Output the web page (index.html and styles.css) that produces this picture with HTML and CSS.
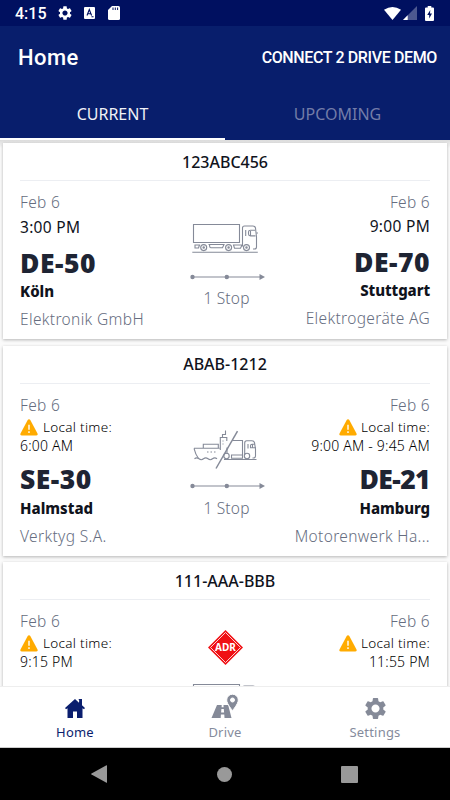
FILE: index.html
```html
<!DOCTYPE html>
<html lang="en">
<head>
    <meta charset="UTF-8">
    <meta name="viewport" content="width=device-width, initial-scale=1.0">
    <title>Home</title>
    <link rel="stylesheet" href="styles.css">
</head>
<body>
    <!-- shared icons -->
    <svg class="sprite" width="0" height="0">
        <symbol id="gear" viewBox="0 0 24 24">
            <path d="M19.43 12.98c.04-.32.07-.64.07-.98s-.03-.66-.07-.98l2.11-1.65c.19-.15.24-.42.12-.64l-2-3.46c-.12-.22-.39-.3-.61-.22l-2.49 1c-.52-.4-1.08-.73-1.69-.98l-.38-2.65C14.46 2.18 14.25 2 14 2h-4c-.25 0-.46.18-.49.42l-.38 2.65c-.61.25-1.17.59-1.69.98l-2.49-1c-.23-.09-.49 0-.61.22l-2 3.46c-.13.22-.07.49.12.64l2.11 1.65c-.04.32-.07.65-.07.98s.03.66.07.98l-2.11 1.65c-.19.15-.24.42-.12.64l2 3.46c.12.22.39.3.61.22l2.49-1c.52.4 1.08.73 1.69.98l.38 2.65c.03.24.24.42.49.42h4c.25 0 .46-.18.49-.42l.38-2.65c.61-.25 1.17-.59 1.69-.98l2.49 1c.23.09.49 0 .61-.22l2-3.46c.12-.22.07-.49-.12-.64l-2.11-1.65zM12 15.9c-2.15 0-3.9-1.75-3.9-3.9s1.75-3.9 3.9-3.9 3.9 1.75 3.9 3.900-1.750 3.900-3.900 3.900z"/>
        </symbol>
        <symbol id="warning" viewBox="0 0 18 17">
            <path fill="#ffab00" d="M9 .3c.6 0 1 .3 1.300 .8l7.200 13.400c.5 1-.1 2-1.200 2H1.700c-1.100 0-1.700-1-1.200-2L7.700 1.100C8 .6 8.400 .3 9 .3z"/>
            <path stroke="#fff" stroke-width="1.400" d="M9 5.800v5M9 12.300v1.700"/>
        </symbol>
        <symbol id="truck" viewBox="0 0 66 30">
            <g fill="none" stroke="#858a98" stroke-width="1.100">
                <path d="M1.500 1.500h46v18h-46zM.3 29.200h65.500"/>
                <path d="M50.500 21.500V5q0-2 2-2h8.500q2 0 2.500 2l1 9v10q0 2-2 2h-1.500M50.500 21.500v2"/>
                <path d="M64.300 10h2M53.700 7v6M63 7.300h-4.500q-2 0-2 1.800v2q0 1.800 2 1.800h5M58.500 8v5"/>
                <path d="M3 22h4.500l-1 3H3zM16.500 21.500h15.500l-1.500 3.300h-11.500q-1.500 0-1.500-3.300M41.500 22h8.500l-1.500 3.200h-6z"/>
                <circle cx="11.700" cy="24.600" r="3"/><circle cx="36.600" cy="24.600" r="3"/><circle cx="54.500" cy="24.600" r="3"/>
                <circle cx="11.700" cy="24.600" r=".7"/><circle cx="36.600" cy="24.600" r=".7"/><circle cx="54.500" cy="24.600" r=".7"/>
            </g>
        </symbol>
        <symbol id="ferry" viewBox="0 0 64 40">
            <g fill="none" stroke="#858a98" stroke-width="1.100">
                <path d="M1 18.300h25.500M5.500 28.500Q2.500 24.500 1 18.300M10.300 18.300v-4h15v4M27.300 20V7.500h6.500v3.500M29.500 7.500V4.500h3V.5"/>
                <path d="M1.500 28.800q2.200-1.800 4.500 0t4.500 0 4.500 0 4.500 0 4.500 0"/>
                <path d="M14 22h1.500M17.500 22h1.500M21 22h1.500M29.500 11h1M29.500 14h1"/>
                <path stroke-width="1.500" d="M44.500 1.200L23 38.500"/>
                <path d="M39.500 10.500h10v14.500M34 24V17.500M31 29.500h32.500"/>
                <path d="M51.700 25V13q0-2.300 2-2.300h5.300q2 0 2.500 2l1 6.300v7q0 2-2 2h-1M62 14.300h-3q-1.500 0-1.500 1.500v2h5.500M55 14v4.500M59.500 14v4"/>
                <path d="M38.500 25h11v3.200h-11z"/>
                <circle cx="33.500" cy="26" r="2.700"/><circle cx="54" cy="26" r="2.700"/>
            </g>
        </symbol>
        <symbol id="route" viewBox="0 0 76 6">
            <path stroke="#858a98" stroke-width="1.200" d="M2 3h70"/>
            <path fill="#858a98" d="M69.500 0L75 3l-5.500 3z"/>
            <circle cx="2.500" cy="3" r="2.200" fill="#858a98"/><circle cx="36.800" cy="3" r="2.200" fill="#858a98"/>
        </symbol>
    </svg>

    <div class="phone">
        <header>
            <div class="status">
                <span class="clock">4:15</span>
                <svg class="st-gear" width="16" height="16" fill="#fff"><use href="#gear"/></svg>
                <svg class="st-lang" width="11" height="12" viewBox="0 0 11 12">
                    <rect width="11" height="12" rx="1" fill="#fff"/>
                    <path d="M3 8.500L5.300 2.500l2.300 6M3.700 6.700h3M7.500 9.700h2" fill="none" stroke="#001060" stroke-width="1.100"/>
                </svg>
                <svg class="st-card" width="12" height="14" viewBox="0 0 12 14">
                    <path fill="#fff" d="M4 0h6.500Q12 0 12 1.500v11q0 1.500-1.500 1.500h-9Q0 14 0 12.500V4z"/>
                    <path stroke="#001060" stroke-width="1" d="M5 1.500v2.500M7.300 1.500v2.500M9.600 1.500v2.500"/>
                </svg>
                <div class="status-right">
                    <svg width="17" height="13" viewBox="0 0 17 13"><path fill="#fff" d="M0 2.800Q8.500-2.800 17 2.800L8.500 13z"/></svg>
                    <svg width="14" height="14" viewBox="0 0 14 14"><path fill="#4d5890" d="M14 0v14H0z"/><path fill="#fff" d="M4.700 9.300V14H0z"/></svg>
                    <svg class="battery" width="9" height="15" viewBox="0 0 9 15">
                        <path fill="#fff" d="M2.700 0h3.600v1.500H8q1 0 1 1V14q0 1-1 1H1q-1 0-1-1V2.500q0-1 1-1h1.700z"/>
                        <path fill="#001060" d="M5.300 4L2.200 9h2v3.500L7 7.500H5z"/>
                    </svg>
                </div>
            </div>
            <div class="appbar">
                <h1>Home</h1>
                <span class="demo">CONNECT 2 DRIVE DEMO</span>
            </div>
            <div class="tabs">
                <div class="tab active">CURRENT</div>
                <div class="tab">UPCOMING</div>
            </div>
        </header>

        <main>
            <section class="card first">
                <h2>123ABC456</h2>
                <div class="trip">
                    <div class="place">
                        <p class="date">Feb 6</p>
                        <p class="time">3:00 PM</p>
                        <p class="code">DE-50</p>
                        <p class="city">Köln</p>
                        <p class="company">Elektronik GmbH</p>
                    </div>
                    <div class="middle">
                        <svg class="truck" width="66" height="30"><use href="#truck"/></svg>
                        <svg class="route" width="76" height="6"><use href="#route"/></svg>
                        <p class="stops">1 Stop</p>
                    </div>
                    <div class="place right">
                        <p class="date">Feb 6</p>
                        <p class="time">9:00 PM</p>
                        <p class="code">DE-70</p>
                        <p class="city">Stuttgart</p>
                        <p class="company">Elektrogeräte AG</p>
                    </div>
                </div>
            </section>

            <section class="card second">
                <h2>ABAB-1212</h2>
                <div class="trip">
                    <div class="place">
                        <p class="date">Feb 6</p>
                        <p class="local"><svg width="18" height="17"><use href="#warning"/></svg>Local time:</p>
                        <p class="hours">6:00 AM</p>
                        <p class="code">SE-30</p>
                        <p class="city">Halmstad</p>
                        <p class="company">Verktyg S.A.</p>
                    </div>
                    <div class="middle">
                        <svg class="ferry" width="64" height="40"><use href="#ferry"/></svg>
                        <svg class="route" width="76" height="6"><use href="#route"/></svg>
                        <p class="stops">1 Stop</p>
                    </div>
                    <div class="place right">
                        <p class="date">Feb 6</p>
                        <p class="local"><svg width="18" height="17"><use href="#warning"/></svg>Local time:</p>
                        <p class="hours">9:00 AM - 9:45 AM</p>
                        <p class="code narrow">DE-21</p>
                        <p class="city">Hamburg</p>
                        <p class="company">Motorenwerk Ha...</p>
                    </div>
                </div>
            </section>

            <section class="card third">
                <h2>111-AAA-BBB</h2>
                <div class="trip">
                    <div class="place">
                        <p class="date">Feb 6</p>
                        <p class="local"><svg width="18" height="17"><use href="#warning"/></svg>Local time:</p>
                        <p class="hours">9:15 PM</p>
                    </div>
                    <div class="middle">
                        <svg class="adr" width="35" height="35" viewBox="0 0 35 35">
                            <path fill="#f01014" d="M17.500 0L35 17.500 17.500 35 0 17.500z"/>
                            <path fill="none" stroke="#fff" stroke-width=".8" d="M17.500 2.500L32.500 17.500 17.500 32.500 2.500 17.500z"/>
                            <text x="17.500" y="21.200" text-anchor="middle" class="adr-text">ADR</text>
                        </svg>
                        <svg class="truck" width="66" height="30"><use href="#truck"/></svg>
                    </div>
                    <div class="place right">
                        <p class="date">Feb 6</p>
                        <p class="local"><svg width="18" height="17"><use href="#warning"/></svg>Local time:</p>
                        <p class="hours">11:55 PM</p>
                    </div>
                </div>
            </section>
        </main>

        <nav class="bottom">
            <div class="item selected">
                <svg width="20" height="19" viewBox="0 0 20 19"><path fill="#0a1e6e" d="M10 0l4 3.700L14.200 1.500L13.500 0H17v6.300l3 2.700-1 1.200-1.500-1V19H12v-6.500H8V19H2.500V9.200l-1.500 1L0 9z"/></svg>
                <span>Home</span>
            </div>
            <div class="item drive">
                <svg width="28" height="24" viewBox="0 0 28 24">
                    <path fill="#858a98" fill-rule="evenodd" d="M6 11h4.700l-.1 2.300h2L12.500 11h4.700L20.500 24h-7l-.2-3.500h-3.400L9.700 24H.5zM10.400 15l-.3 3.500h3l-.3-3.500z"/>
                    <path fill="#858a98" stroke="#fff" stroke-width="1" fill-rule="evenodd" d="M21.500.2a5.800 5.800 0 0 1 5.800 5.800c0 4-5.800 10.500-5.800 10.500S15.700 10 15.700 6A5.800 5.800 0 0 1 21.500.2zM21.500 4a2 2 0 1 0 0 4 2 2 0 0 0 0-4z"/>
                </svg>
                <span>Drive</span>
            </div>
            <div class="item settings">
                <svg width="25" height="25" fill="#858a98"><use href="#gear"/></svg>
                <span>Settings</span>
            </div>
        </nav>

        <div class="android">
            <div><svg width="16" height="18" viewBox="0 0 16 18"><path fill="#999" d="M16 .5v17q0 .5-1 0L.5 9.500q-.7-.5 0-1L15 .5q1-.5 1 0z"/></svg></div>
            <div><span class="circle"></span></div>
            <div><span class="square"></span></div>
        </div>
    </div>
</body>
</html>
```
FILE: styles.css
```css
* {
    box-sizing: border-box;
}
body {
    margin: 0;
    font-family: "Noto Sans", "Open Sans", sans-serif;
    color: #10131c;
}
h1, h2, p {
    margin: 0;
    font-weight: normal;
}
svg {
    display: block;
    flex: none;
}
.sprite {
    display: none;
}
.phone {
    width: 450px;
    height: 800px;
    overflow: hidden;
    display: flex;
    flex-direction: column;
    background-color: #fafafa;
}

/* header */
header {
    height: 140px;
    flex: none;
    background-color: #081e6c;
    color: white;
}
.status {
    height: 26px;
    padding-left: 15px;
    padding-right: 16px;
    display: flex;
    align-items: center;
    background-color: #001060;
}
.clock {
    font: 500 16px/26px Roboto, sans-serif;
    width: 42px;
    padding-top: 2px;
}
.st-lang {
    margin-left: 11px;
}
.st-card {
    margin-left: 13px;
}
.status-right {
    margin-left: auto;
    display: flex;
    align-items: center;
    gap: 2px;
}
.battery {
    margin-left: 6px;
}
.appbar {
    height: 64px;
    padding: 0 13px 0 18px;
    display: flex;
    justify-content: space-between;
    align-items: center;
}
h1 {
    font: 500 22px/30px Roboto, sans-serif;
    letter-spacing: 0.4px;
}
.demo {
    font: 500 16px/24px Roboto, sans-serif;
    letter-spacing: -0.37px;
}
.tabs {
    height: 50px;
    display: flex;
}
.tab {
    flex: 1;
    text-align: center;
    font-size: 16px;
    line-height: 48px;
    color: #737ca8;
}
.tab.active {
    color: #f0f1f6;
    border-bottom: 2px solid white;
}

/* trips */
main {
    flex: 1;
    min-height: 0;
    overflow: hidden;
    padding: 3px 3px 0;
    background: linear-gradient(#dcdcdc, #fafafa 8px);
}
.card {
    width: 444px;
    padding: 0 17px;
    background-color: white;
    box-shadow: 0 1px 3px rgba(0, 0, 0, 0.28);
    margin-bottom: 7px;
}
.first {
    height: 196px;
}
.second {
    height: 210px;
    margin-bottom: 6px;
}
.third {
    height: 210px;
}
h2 {
    height: 38px;
    line-height: 38px;
    font-size: 16px;
    font-weight: 500;
    text-align: center;
    border-bottom: 1px solid #eceef2;
}
.second h2 {
    line-height: 37px;
}
.trip {
    display: grid;
    grid-template-columns: 160px 90px 160px;
    padding-top: 9px;
}
.place p {
    white-space: nowrap;
}
.right {
    text-align: right;
}
.date {
    height: 24px;
    line-height: 24px;
    font-size: 15.5px;
    font-weight: 300;
    letter-spacing: 0.3px;
    color: #666d80;
}
.time {
    height: 27px;
    line-height: 27px;
    font-size: 15.5px;
    letter-spacing: 0.3px;
}
.first .right .time {
    height: 26px;
    line-height: 25px;
}
.code {
    height: 44px;
    line-height: 44px;
    font-size: 26.5px;
    font-weight: 900;
    letter-spacing: 0.5px;
    color: #1e2433;
}
.code.narrow {
    letter-spacing: -0.6px;
}
.city {
    height: 12px;
    line-height: 12px;
    font-size: 15px;
    font-weight: 800;
}
.right .city {
    letter-spacing: -0.1px;
}
.company {
    height: 44px;
    line-height: 44px;
    font-size: 15.5px;
    font-weight: 300;
    letter-spacing: 0.35px;
    color: #666d80;
}
.local {
    height: 19px;
    line-height: 19px;
    font-size: 13.5px;
    font-weight: 300;
    letter-spacing: 0.3px;
    color: #000;
    display: flex;
    align-items: center;
    gap: 5px;
    padding-top: 1px;
}
.right .local {
    justify-content: flex-end;
    gap: 4px;
}
.hours {
    height: 19px;
    line-height: 20px;
    font-size: 14px;
    font-weight: 300;
    letter-spacing: 0.2px;
    color: #000;
}
.second .code {
    height: 46px;
    line-height: 49px;
}
.second .city {
    height: 13px;
    line-height: 14px;
}
.middle {
    display: flex;
    flex-direction: column;
    align-items: center;
}
.middle .truck {
    margin-top: 33px;
}
.ferry {
    margin-top: 37px;
}
.route {
    margin-top: 21px;
    margin-left: 5px;
}
.ferry + .route {
    margin-top: 13px;
}
.stops {
    margin-top: 7px;
    margin-left: 3px;
    line-height: 24px;
    font-size: 15.5px;
    font-weight: 300;
    letter-spacing: 0.2px;
    color: #666d80;
}
.first .stops {
    margin-top: 6px;
}
.adr {
    margin-top: 21px;
}
.third .truck {
    margin-top: 18px;
}
.adr-text {
    font: bold 10px "Noto Sans", sans-serif;
    fill: white;
}

/* bottom bar */
.bottom {
    height: 62px;
    flex: none;
    display: flex;
    background-color: white;
    border-top: 1px solid #eee;
    border-bottom: 1px solid #ccc;
}
.item {
    flex: 1;
    display: flex;
    flex-direction: column;
    align-items: center;
    justify-content: flex-end;
    padding-bottom: 6px;
    font-size: 13px;
    line-height: 18px;
    letter-spacing: 0.2px;
    color: #858b9c;
}
.item svg {
    margin-bottom: 5px;
}
.item.settings svg {
    margin-bottom: 2px;
}
.item.selected {
    color: #0a1e6e;
}
.android {
    height: 52px;
    flex: none;
    display: flex;
    align-items: center;
    justify-content: center;
    padding-right: 2px;
    background-color: black;
}
.android div {
    width: 125px;
    display: flex;
    justify-content: center;
}
.circle {
    width: 15px;
    height: 15px;
    border-radius: 50%;
    background-color: #999;
}
.square {
    width: 17px;
    height: 17px;
    border-radius: 1px;
    background-color: #999;
}
```
